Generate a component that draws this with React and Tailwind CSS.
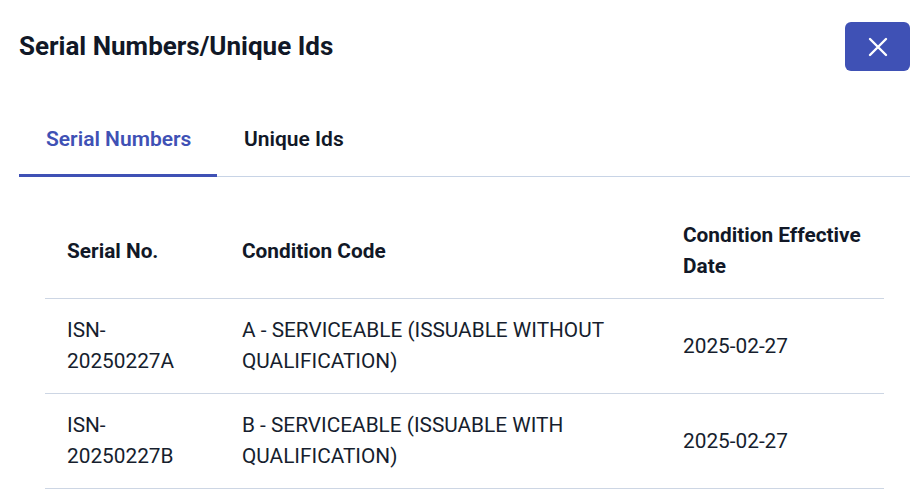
import React, { useState } from "react";

const rows = [
  {
    serial: "ISN-20250227A",
    code: "A - SERVICEABLE (ISSUABLE WITHOUT QUALIFICATION)",
    date: "2025-02-27",
  },
  {
    serial: "ISN-20250227B",
    code: "B - SERVICEABLE (ISSUABLE WITH QUALIFICATION)",
    date: "2025-02-27",
  },
];

const CloseIcon = () => (
  <svg width="20" height="20" viewBox="0 0 20 20" fill="none">
    <path d="M2 2L18 18M18 2L2 18" stroke="white" strokeWidth="2.4" strokeLinecap="round" />
  </svg>
);

export default function App() {
  const [tab, setTab] = useState("serial");

  return (
    <div className="w-[920px] h-[498px] bg-white overflow-hidden font-['Roboto',sans-serif] text-[#111827]">
      {/* Header */}
      <div className="flex items-center justify-between pl-[19px] pr-[10px] pt-[22px]">
        <h1 className="text-[26px] font-bold leading-[49px]">Serial Numbers/Unique Ids</h1>
        <button className="w-[65px] h-[49px] rounded-[6px] bg-[#3f51b5] flex items-center justify-center">
          <CloseIcon />
        </button>
      </div>

      {/* Tabs */}
      <div className="mr-[10px] ml-[19px] mt-[32px] flex border-b border-[#c8d4e6]">
        <button
          onClick={() => setTab("serial")}
          className={`w-[198px] h-[74px] pl-[27px] pt-[2px] text-left text-[21px] font-semibold -mb-px border-b-[3px] ${
            tab === "serial" ? "text-[#3f51b5] border-[#3f51b5]" : "text-[#111827] border-transparent"
          }`}
        >
          Serial Numbers
        </button>
        <button
          onClick={() => setTab("unique")}
          className={`h-[74px] px-[27px] pt-[2px] text-left text-[21px] font-semibold -mb-px border-b-[3px] ${
            tab === "unique" ? "text-[#3f51b5] border-[#3f51b5]" : "text-[#111827] border-transparent"
          }`}
        >
          Unique Ids
        </button>
      </div>

      {/* Table */}
      <div className="ml-[45px] mt-[27px] w-[839px]">
        <div className="grid grid-cols-[175px_441px_223px] border-b border-[#cdd6e4] text-[20.8px] font-bold leading-[31px]">
          <div className="px-[22px] py-4 flex items-center">Serial No.</div>
          <div className="px-[22px] py-4 flex items-center">Condition Code</div>
          <div className="px-[22px] py-4 flex items-center">Condition Effective Date</div>
        </div>
        {rows.map((r) => (
          <div
            key={r.serial}
            className="grid grid-cols-[175px_441px_223px] border-b border-[#cdd6e4] text-[20.8px] leading-[31px] text-[#161e2e]"
          >
            <div className="px-[22px] py-4 flex items-center">
              <span>
                ISN-
                <br />
                {r.serial.slice(4)}
              </span>
            </div>
            <div className="px-[22px] py-4 flex items-center">{r.code}</div>
            <div className="px-[22px] py-4 flex items-center">{r.date}</div>
          </div>
        ))}
      </div>
    </div>
  );
}
